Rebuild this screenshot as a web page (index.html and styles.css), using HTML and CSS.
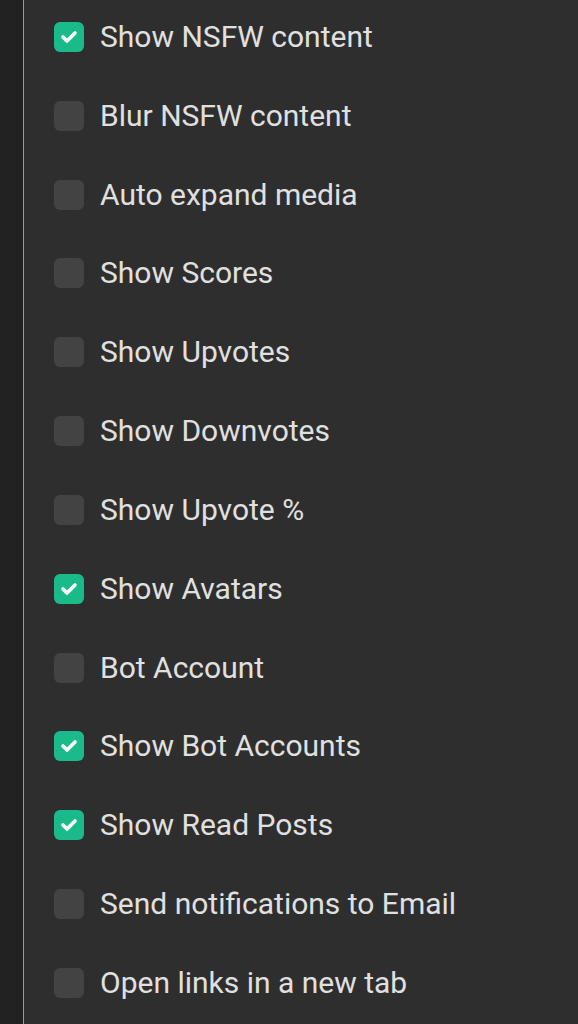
FILE: index.html
```html
<!DOCTYPE html>
<html>
<head>
<meta charset="utf-8">
<link rel="stylesheet" href="styles.css">
</head>
<body>
<div class="page">
  <div class="rail"></div>
  <div class="panel">
    <ul class="options">
      <li class="option"><span class="box checked"><svg viewBox="0 0 30 30"><path d="M9 15 L13 19 L21 11"/></svg></span><span class="label">Show NSFW content</span></li>
      <li class="option"><span class="box"></span><span class="label">Blur NSFW content</span></li>
      <li class="option"><span class="box"></span><span class="label">Auto expand media</span></li>
      <li class="option"><span class="box"></span><span class="label">Show Scores</span></li>
      <li class="option"><span class="box"></span><span class="label">Show Upvotes</span></li>
      <li class="option"><span class="box"></span><span class="label">Show Downvotes</span></li>
      <li class="option"><span class="box"></span><span class="label">Show Upvote %</span></li>
      <li class="option"><span class="box checked"><svg viewBox="0 0 30 30"><path d="M9 15 L13 19 L21 11"/></svg></span><span class="label">Show Avatars</span></li>
      <li class="option"><span class="box"></span><span class="label">Bot Account</span></li>
      <li class="option"><span class="box checked"><svg viewBox="0 0 30 30"><path d="M9 15 L13 19 L21 11"/></svg></span><span class="label">Show Bot Accounts</span></li>
      <li class="option"><span class="box checked"><svg viewBox="0 0 30 30"><path d="M9 15 L13 19 L21 11"/></svg></span><span class="label">Show Read Posts</span></li>
      <li class="option"><span class="box"></span><span class="label">Send notifications to Email</span></li>
      <li class="option"><span class="box"></span><span class="label">Open links in a new tab</span></li>
    </ul>
  </div>
</div>
</body>
</html>
```
FILE: styles.css
```css
html, body {
  margin: 0;
  padding: 0;
  height: 100%;
  background: #2e2e2e;
}
.page {
  display: flex;
  width: 578px;
  height: 1024px;
  overflow: hidden;
}
.rail {
  width: 23px;
  flex: none;
  background: #222222;
  border-right: 1px solid #9a9a9a;
}
.panel {
  flex: 1;
  background: #2e2e2e;
}
.options {
  list-style: none;
  margin: 0;
  padding: 22px 0 0 30px;
  display: flex;
  flex-direction: column;
  gap: 48.83px;
}
.option {
  display: flex;
  align-items: center;
  height: 30px;
  gap: 16px;
}
.box {
  width: 30px;
  height: 30px;
  flex: none;
  border-radius: 6px;
  background: #434343;
  display: flex;
}
.box.checked {
  background: #1bba8b;
}
.box svg {
  width: 30px;
  height: 30px;
}
.box svg path {
  fill: none;
  stroke: #ffffff;
  stroke-width: 3.6;
  stroke-linecap: round;
  stroke-linejoin: round;
}
.label {
  font-family: Roboto, "Noto Sans", sans-serif;
  font-size: 30px;
  color: #e0e0e0;
  white-space: nowrap;
  line-height: 30px;
}
```
